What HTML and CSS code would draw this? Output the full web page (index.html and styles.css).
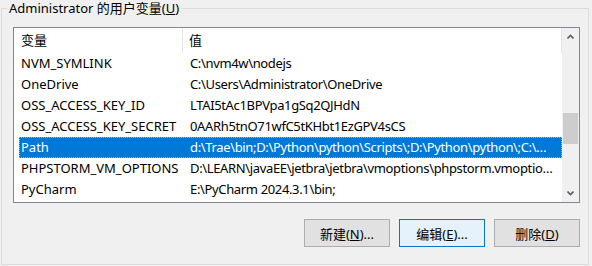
FILE: index.html
```html
<!DOCTYPE html>
<html lang="zh-CN">
  <head>
    <meta charset="utf-8">
    <title>用户变量</title>
    <link rel="stylesheet" href="styles.css">
  </head>
  <body>
    <!-- 用户变量分组 -->
    <fieldset class="group">
      <legend class="group-title">Administrator 的用户变量(<u>U</u>)</legend>

      <div class="listview">
        <div class="list-main">
          <div class="list-header">
            <div class="hcol hcol-name">变量</div>
            <div class="hcol hcol-value">值</div>
          </div>
          <div class="list-rows">
            <div class="row"><span class="c-name">NVM_SYMLINK</span><span class="c-value">C:\nvm4w\nodejs</span></div>
            <div class="row"><span class="c-name">OneDrive</span><span class="c-value">C:\Users\Administrator\OneDrive</span></div>
            <div class="row"><span class="c-name">OSS_ACCESS_KEY_ID</span><span class="c-value">LTAI5tAc1BPVpa1gSq2QJHdN</span></div>
            <div class="row"><span class="c-name">OSS_ACCESS_KEY_SECRET</span><span class="c-value">0AARh5tnO71wfC5tKHbt1EzGPV4sCS</span></div>
            <div class="row selected"><span class="c-name">Path</span><span class="c-value">d:\Trae\bin;D:\Python\python\Scripts\;D:\Python\python\;C:\Users\Administrator\AppData</span></div>
            <div class="row"><span class="c-name">PHPSTORM_VM_OPTIONS</span><span class="c-value">D:\LEARN\javaEE\jetbra\jetbra\vmoptions\phpstorm.vmoptions</span></div>
            <div class="row"><span class="c-name">PyCharm</span><span class="c-value">E:\PyCharm 2024.3.1\bin;</span></div>
          </div>
        </div>

        <!-- 滚动条 -->
        <div class="scrollbar">
          <div class="sb-arrow">
            <svg width="7" height="5" viewBox="0 0 7 5"><path d="M0.5 4.5 L3.5 1.5 L6.5 4.5" fill="none" stroke="#606060" stroke-width="1.6"/></svg>
          </div>
          <div class="sb-track">
            <div class="sb-thumb"></div>
          </div>
          <div class="sb-arrow">
            <svg width="7" height="5" viewBox="0 0 7 5"><path d="M0.5 0.5 L3.5 3.5 L6.5 0.5" fill="none" stroke="#606060" stroke-width="1.6"/></svg>
          </div>
        </div>
      </div>

      <div class="buttons">
        <button class="btn">新建(<u>N</u>)...</button>
        <button class="btn btn-default">编辑(<u>E</u>)...</button>
        <button class="btn">删除(<u>D</u>)</button>
      </div>
    </fieldset>
  </body>
</html>
```

FILE: styles.css
```css
/* 整体 */
body {
  margin: 0;
  background: #f0f0f0;
  font-family: "Noto Sans", "Noto Sans CJK SC", sans-serif;
  font-size: 13px;
  color: #000;
}

/* 分组框 */
.group {
  margin: 0 0 0 1px;
  width: 588px;
  min-width: 0;
  box-sizing: border-box;
  border: 1px solid #dcdcdc;
  padding: 11px 8px 17px 11px;
}

.group-title {
  margin-left: -6px;
  padding: 0 2px;
  line-height: 16px;
  height: 16px;
}

/* 列表 */
.listview {
  display: flex;
  height: 176px;
  box-sizing: border-box;
  border: 1px solid #828790;
  background: #fff;
  overflow: hidden;
}

.list-main {
  flex: 1;
  min-width: 0;
  overflow: hidden;
}

.list-header {
  display: flex;
  height: 25px;
  line-height: 25px;
}

.hcol {
  box-sizing: border-box;
  white-space: nowrap;
}

.hcol-name {
  width: 169px;
  padding-left: 7px;
  border-right: 1px solid #e5e5e5;
}

.hcol-value {
  flex: 1;
  padding-left: 6px;
  border-right: 1px solid #e5e5e5;
}

.list-rows {
  padding-left: 5px;
}

.row {
  display: flex;
  height: 21px;
  line-height: 21px;
  box-sizing: border-box;
}

.row.selected {
  background: #0078d7;
  color: #fff;
  outline: 1px dotted #f3a24a;
  outline-offset: -1px;
}

.c-name {
  width: 164px;
  flex: none;
  padding-left: 2px;
  box-sizing: border-box;
  white-space: nowrap;
  overflow: hidden;
}

.c-value {
  flex: 1;
  min-width: 0;
  padding: 0 7px;
  letter-spacing: -0.35px;
  white-space: nowrap;
  overflow: hidden;
  text-overflow: ellipsis;
}

/* 滚动条 */
.scrollbar {
  width: 17px;
  flex: none;
  display: flex;
  flex-direction: column;
  background: #f0f0f0;
}

.sb-arrow {
  height: 17px;
  display: flex;
  align-items: center;
  justify-content: center;
}

.sb-track {
  flex: 1;
  padding-top: 68px;
}

.sb-thumb {
  margin: 0 1px;
  height: 31px;
  background: #cdcdcd;
}

/* 按钮 */
.buttons {
  display: flex;
  justify-content: flex-end;
  gap: 9px;
  margin-top: 16px;
}

.btn {
  width: 86px;
  height: 28px;
  margin: 0;
  padding: 0;
  font-family: inherit;
  font-size: 13px;
  color: #000;
  background: #e1e1e1;
  border: 1px solid #adadad;
}

.btn-default {
  background: #e5f1fb;
  border-color: #0078d7;
}
```
